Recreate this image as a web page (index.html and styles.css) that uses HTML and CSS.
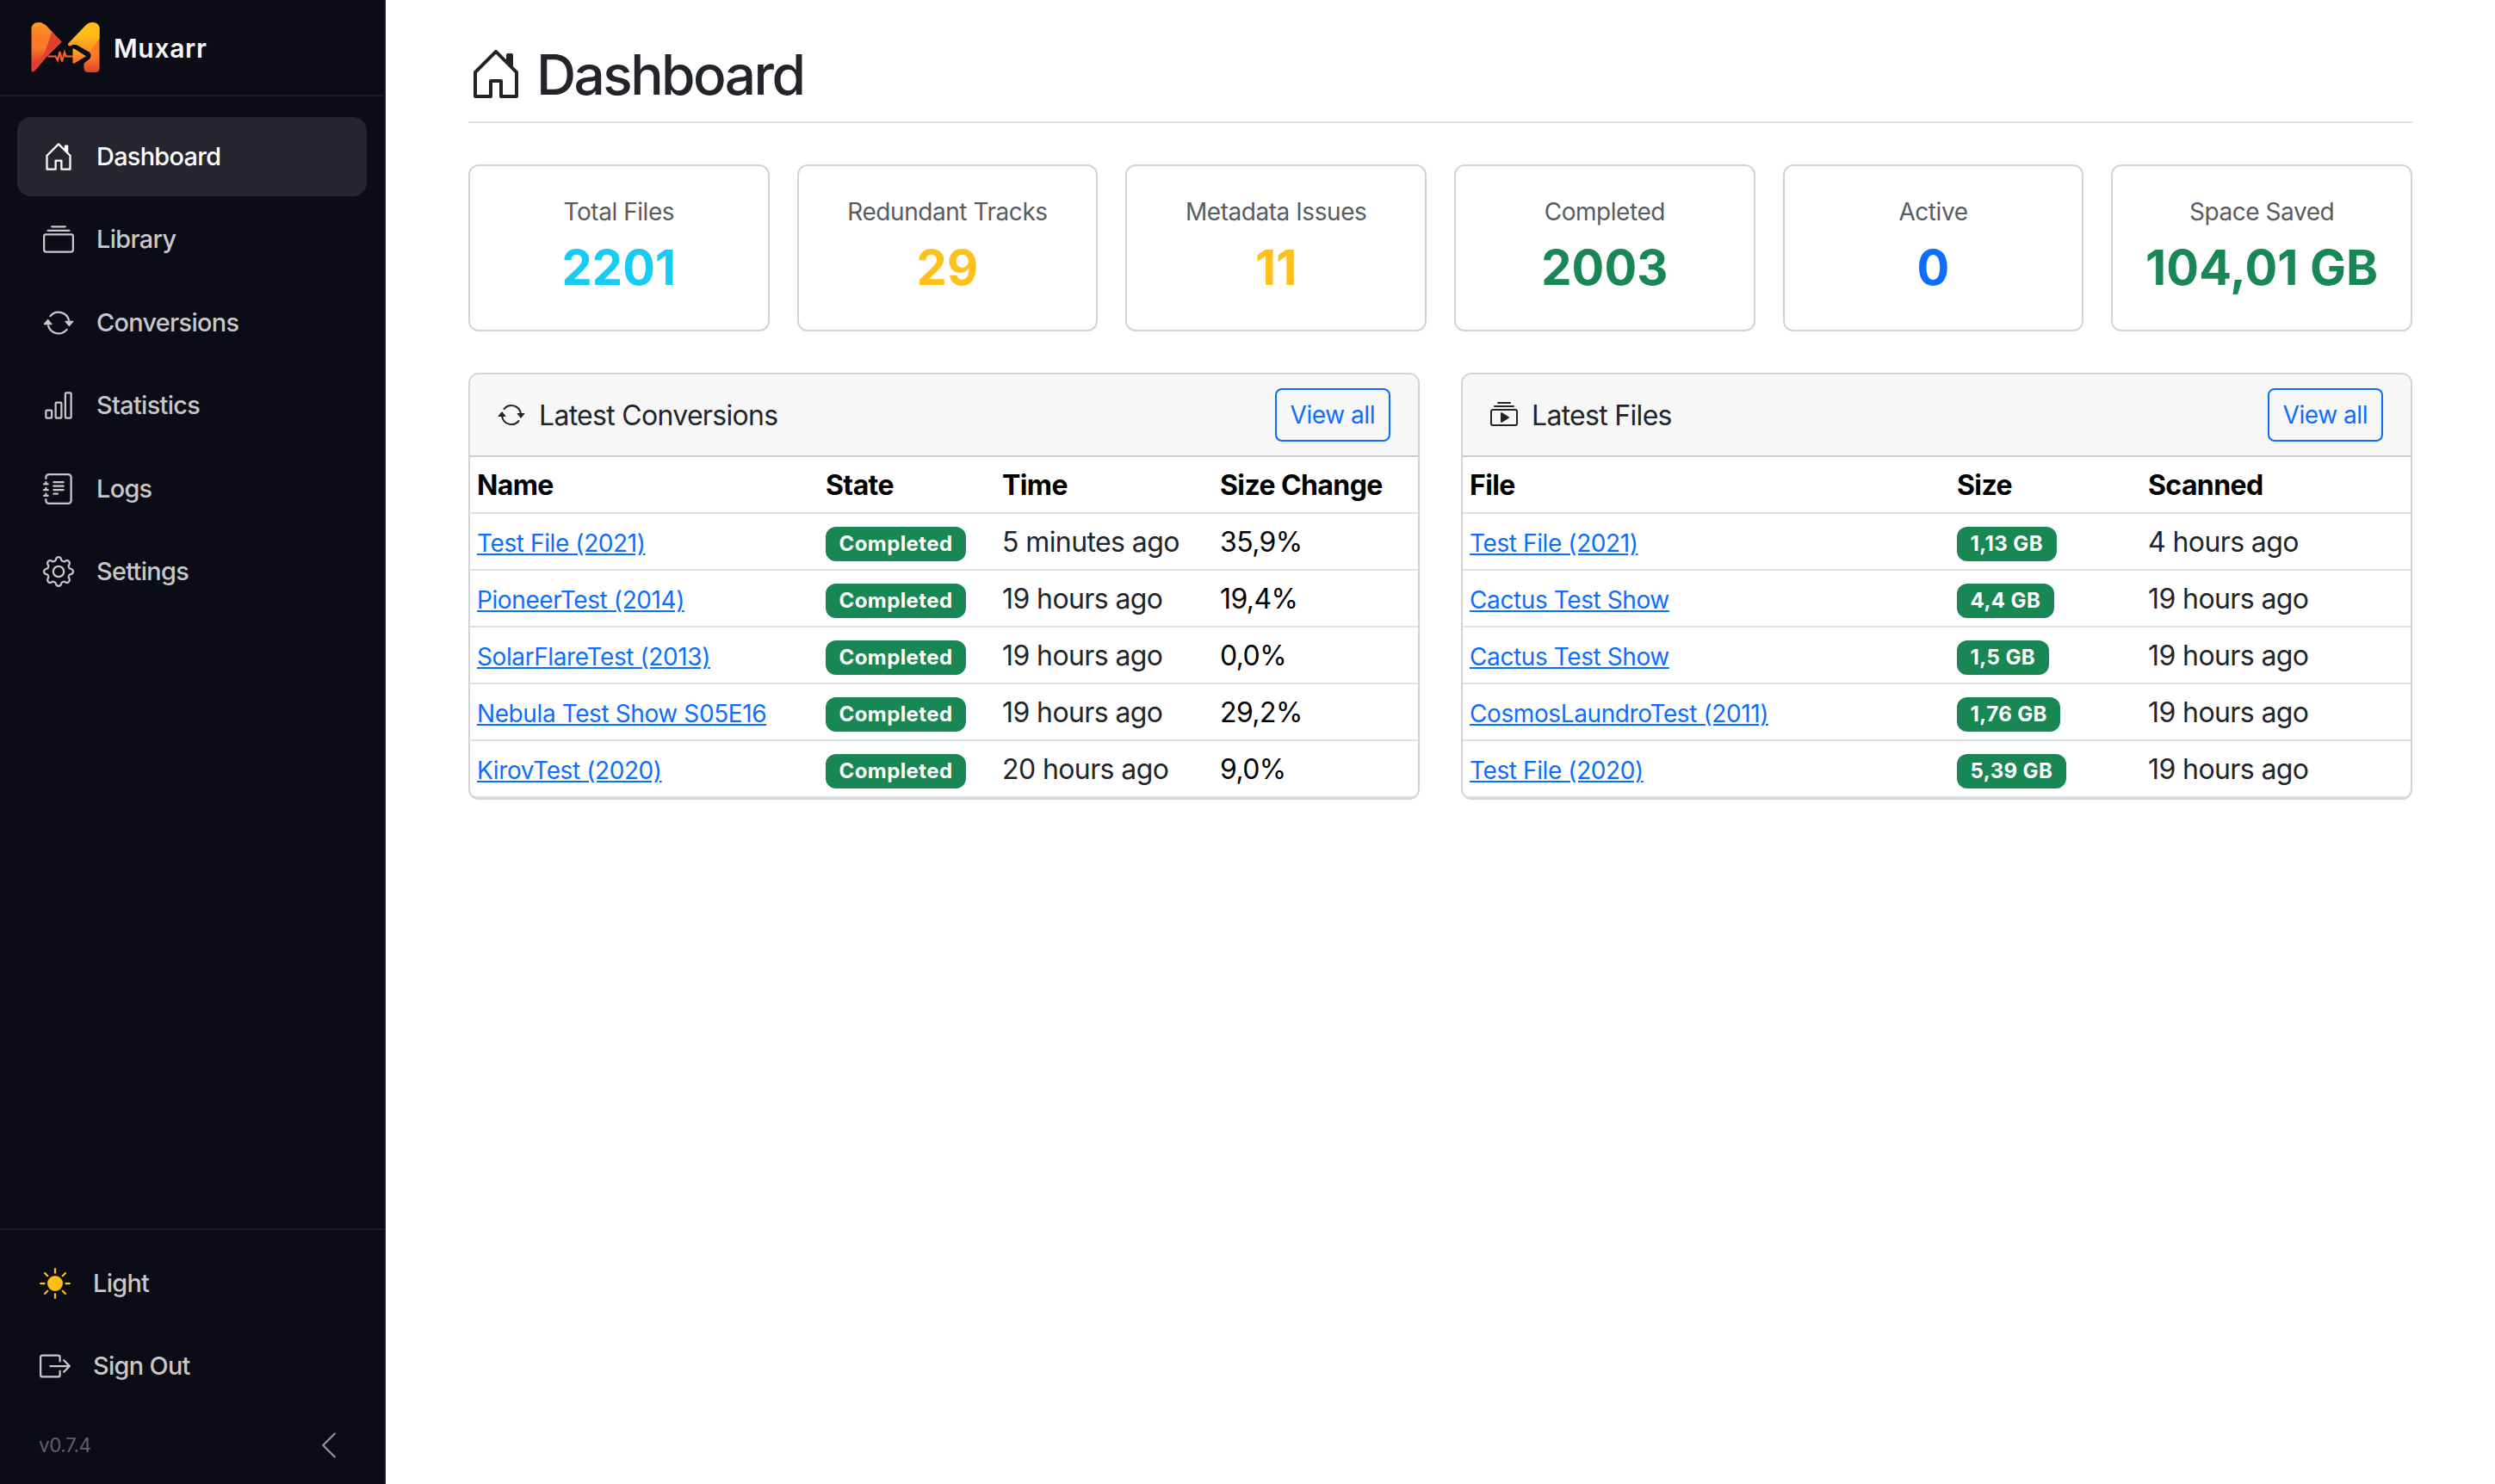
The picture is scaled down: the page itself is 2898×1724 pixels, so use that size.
FILE: index.html
```html
<!DOCTYPE html>
<html lang="en">

<head>
  <meta charset="UTF-8" />
  <meta name="viewport" content="width=device-width, initial-scale=1.0" />
  <title>Muxarr - Dashboard</title>
  <link rel="stylesheet" href="styles.css">
</head>

<body>
  <!-- shared icon shapes -->
  <svg class="icon-defs" xmlns="http://www.w3.org/2000/svg">
    <symbol id="house" viewBox="0 0 16 16">
      <path d="M8.354 1.146a.5.5 0 0 0-.708 0l-6 6A.5.5 0 0 0 1.5 7.5v7a.5.5 0 0 0 .5.5h4.5a.5.5 0 0 0 .5-.5v-4h2v4a.5.5 0 0 0 .5.5H14a.5.5 0 0 0 .5-.5v-7a.5.5 0 0 0-.146-.354L13 5.793V2.5a.5.5 0 0 0-.5-.5h-1a.5.5 0 0 0-.5.5v1.293zM2.5 14V7.707l5.5-5.5 5.5 5.5V14H10v-4a.5.5 0 0 0-.5-.5h-3a.5.5 0 0 0-.5.5v4z"/>
    </symbol>
    <symbol id="collection" viewBox="0 0 16 16">
      <path d="M2.5 3.5a.5.5 0 0 1 0-1h11a.5.5 0 0 1 0 1zm2-2a.5.5 0 0 1 0-1h7a.5.5 0 0 1 0 1zM0 13a1.5 1.5 0 0 0 1.5 1.5h13A1.5 1.5 0 0 0 16 13V6a1.5 1.5 0 0 0-1.5-1.5h-13A1.5 1.5 0 0 0 0 6zm1.5.5A.5.5 0 0 1 1 13V6a.5.5 0 0 1 .5-.5h13a.5.5 0 0 1 .5.5v7a.5.5 0 0 1-.5.5z"/>
    </symbol>
    <symbol id="repeat" viewBox="0 0 16 16">
      <path d="M11.534 7h3.932a.25.25 0 0 1 .192.41l-1.966 2.36a.25.25 0 0 1-.384 0l-1.966-2.36a.25.25 0 0 1 .192-.41m-11 2h3.932a.25.25 0 0 0 .192-.41L2.692 6.23a.25.25 0 0 0-.384 0L.342 8.59A.25.25 0 0 0 .534 9"/>
      <path d="M8 3c-1.552 0-2.94.707-3.857 1.818a.5.5 0 1 1-.771-.636A6.002 6.002 0 0 1 13.917 7H12.9A5 5 0 0 0 8 3M3.1 9a5.002 5.002 0 0 0 8.757 2.182.5.5 0 1 1 .771.636A6.002 6.002 0 0 1 2.083 9z"/>
    </symbol>
    <symbol id="chart" viewBox="0 0 16 16">
      <path d="M4 11H2v3h2zm5-4H7v7h2zm5-5v12h-2V2zm-2-1a1 1 0 0 0-1 1v12a1 1 0 0 0 1 1h2a1 1 0 0 0 1-1V2a1 1 0 0 0-1-1zM6 7a1 1 0 0 1 1-1h2a1 1 0 0 1 1 1v7a1 1 0 0 1-1 1H7a1 1 0 0 1-1-1zm-5 4a1 1 0 0 1 1-1h2a1 1 0 0 1 1 1v3a1 1 0 0 1-1 1H2a1 1 0 0 1-1-1z"/>
    </symbol>
    <symbol id="journal" viewBox="0 0 16 16">
      <path d="M5 10.5a.5.5 0 0 1 .5-.5h2a.5.5 0 0 1 0 1h-2a.5.5 0 0 1-.5-.5m0-2a.5.5 0 0 1 .5-.5h5a.5.5 0 0 1 0 1h-5a.5.5 0 0 1-.5-.5m0-2a.5.5 0 0 1 .5-.5h5a.5.5 0 0 1 0 1h-5a.5.5 0 0 1-.5-.5m0-2a.5.5 0 0 1 .5-.5h5a.5.5 0 0 1 0 1h-5a.5.5 0 0 1-.5-.5"/>
      <path d="M3 0h10a2 2 0 0 1 2 2v12a2 2 0 0 1-2 2H3a2 2 0 0 1-2-2v-1h1v1a1 1 0 0 0 1 1h10a1 1 0 0 0 1-1V2a1 1 0 0 0-1-1H3a1 1 0 0 0-1 1v1H1V2a2 2 0 0 1 2-2"/>
      <path d="M1 5v-.5a.5.5 0 0 1 1 0V5h.5a.5.5 0 0 1 0 1h-2a.5.5 0 0 1 0-1zm0 3v-.5a.5.5 0 0 1 1 0V8h.5a.5.5 0 0 1 0 1h-2a.5.5 0 0 1 0-1zm0 3v-.5a.5.5 0 0 1 1 0v.5h.5a.5.5 0 0 1 0 1h-2a.5.5 0 0 1 0-1z"/>
    </symbol>
    <symbol id="gear" viewBox="0 0 16 16">
      <path d="M8 4.754a3.246 3.246 0 1 0 0 6.492 3.246 3.246 0 0 0 0-6.492M5.754 8a2.246 2.246 0 1 1 4.492 0 2.246 2.246 0 0 1-4.492 0"/>
      <path d="M9.796 1.343c-.527-1.79-3.065-1.79-3.592 0l-.094.319a.873.873 0 0 1-1.255.52l-.292-.16c-1.64-.892-3.433.902-2.54 2.541l.159.292a.873.873 0 0 1-.52 1.255l-.319.094c-1.79.527-1.79 3.065 0 3.592l.319.094a.873.873 0 0 1 .52 1.255l-.16.292c-.892 1.64.901 3.434 2.541 2.54l.292-.159a.873.873 0 0 1 1.255.52l.094.319c.527 1.79 3.065 1.79 3.592 0l.094-.319a.873.873 0 0 1 1.255-.52l.292.16c1.64.893 3.434-.902 2.54-2.541l-.159-.292a.873.873 0 0 1 .52-1.255l.319-.094c1.79-.527 1.79-3.065 0-3.592l-.319-.094a.873.873 0 0 1-.52-1.255l.16-.292c.893-1.64-.902-3.433-2.541-2.54l-.292.159a.873.873 0 0 1-1.255-.52zm-2.633.283c.246-.835 1.428-.835 1.674 0l.094.319a1.873 1.873 0 0 0 2.693 1.115l.291-.16c.764-.415 1.6.42 1.184 1.185l-.159.292a1.873 1.873 0 0 0 1.116 2.692l.318.094c.835.246.835 1.428 0 1.674l-.319.094a1.873 1.873 0 0 0-1.115 2.693l.16.291c.415.764-.42 1.6-1.185 1.184l-.291-.159a1.873 1.873 0 0 0-2.693 1.116l-.094.318c-.246.835-1.428.835-1.674 0l-.094-.319a1.873 1.873 0 0 0-2.692-1.115l-.292.16c-.764.415-1.6-.42-1.184-1.185l.159-.291A1.873 1.873 0 0 0 1.945 8.93l-.319-.094c-.835-.246-.835-1.428 0-1.674l.319-.094A1.873 1.873 0 0 0 3.06 4.377l-.16-.292c-.415-.764.42-1.6 1.185-1.184l.292.159a1.873 1.873 0 0 0 2.692-1.115z"/>
    </symbol>
    <symbol id="sun" viewBox="0 0 16 16">
      <path d="M8 12a4 4 0 1 0 0-8 4 4 0 0 0 0 8M8 0a.5.5 0 0 1 .5.5v2a.5.5 0 0 1-1 0v-2A.5.5 0 0 1 8 0m0 13a.5.5 0 0 1 .5.5v2a.5.5 0 0 1-1 0v-2A.5.5 0 0 1 8 13m8-5a.5.5 0 0 1-.5.5h-2a.5.5 0 0 1 0-1h2a.5.5 0 0 1 .5.5M3 8a.5.5 0 0 1-.5.5h-2a.5.5 0 0 1 0-1h2A.5.5 0 0 1 3 8m10.657-5.657a.5.5 0 0 1 0 .707l-1.414 1.415a.5.5 0 1 1-.707-.708l1.414-1.414a.5.5 0 0 1 .707 0m-9.193 9.193a.5.5 0 0 1 0 .707L3.05 13.657a.5.5 0 0 1-.707-.707l1.414-1.414a.5.5 0 0 1 .707 0m9.193 2.121a.5.5 0 0 1-.707 0l-1.414-1.414a.5.5 0 0 1 .707-.707l1.414 1.414a.5.5 0 0 1 0 .707M4.464 4.465a.5.5 0 0 1-.707 0L2.343 3.05a.5.5 0 1 1 .707-.707l1.414 1.414a.5.5 0 0 1 0 .708"/>
    </symbol>
    <symbol id="signout" viewBox="0 0 16 16">
      <path d="M10 12.5a.5.5 0 0 1-.5.5h-8a.5.5 0 0 1-.5-.5v-9a.5.5 0 0 1 .5-.5h8a.5.5 0 0 1 .5.5v2a.5.5 0 0 0 1 0v-2A1.5 1.5 0 0 0 9.5 2h-8A1.5 1.5 0 0 0 0 3.5v9A1.5 1.5 0 0 0 1.5 14h8a1.5 1.5 0 0 0 1.5-1.5v-2a.5.5 0 0 0-1 0z"/>
      <path d="M15.854 8.354a.5.5 0 0 0 0-.708l-3-3a.5.5 0 0 0-.708.708L14.293 7.5H5.5a.5.5 0 0 0 0 1h8.793l-2.147 2.146a.5.5 0 0 0 .708.708z"/>
    </symbol>
    <symbol id="chevron" viewBox="0 0 16 16">
      <path d="M11.354 1.646a.5.5 0 0 1 0 .708L5.707 8l5.647 5.646a.5.5 0 0 1-.708.708l-6-6a.5.5 0 0 1 0-.708l6-6a.5.5 0 0 1 .708 0"/>
    </symbol>
    <symbol id="collection-play" viewBox="0 0 16 16">
      <path d="M2 3a.5.5 0 0 0 .5.5h11a.5.5 0 0 0 0-1h-11A.5.5 0 0 0 2 3m2-2a.5.5 0 0 0 .5.5h7a.5.5 0 0 0 0-1h-7A.5.5 0 0 0 4 1m2.765 5.576A.5.5 0 0 0 6 7v5a.5.5 0 0 0 .765.424l4-2.5a.5.5 0 0 0 0-.848z"/>
      <path d="M1.5 14.5A1.5 1.5 0 0 1 0 13V6a1.5 1.5 0 0 1 1.5-1.5h13A1.5 1.5 0 0 1 16 6v7a1.5 1.5 0 0 1-1.5 1.5zm13-1a.5.5 0 0 0 .5-.5V6a.5.5 0 0 0-.5-.5h-13A.5.5 0 0 0 1 6v7a.5.5 0 0 0 .5.5z"/>
    </symbol>
  </svg>

  <aside class="sidebar">
    <div class="brand">
      <svg class="logo" viewBox="0 0 80 58">
        <defs>
          <linearGradient id="lg-left" x1="0" y1="0" x2="0" y2="1">
            <stop offset="0" stop-color="#fd9a22"/>
            <stop offset=".3" stop-color="#fb7a29"/>
            <stop offset=".5" stop-color="#fb7a29"/>
            <stop offset=".8" stop-color="#e2402c"/>
          </linearGradient>
          <linearGradient id="lg-yellow" x1="0" y1="0" x2="0" y2="1">
            <stop offset=".4" stop-color="#fdbe18"/>
            <stop offset="1" stop-color="#fb8a24"/>
          </linearGradient>
          <linearGradient id="lg-right" x1="0" y1="0" x2="0" y2="1">
            <stop offset=".7" stop-color="#fb7a29"/>
            <stop offset="1" stop-color="#e2402c"/>
          </linearGradient>
          <linearGradient id="lg-play" x1="0" y1="0" x2="0" y2="1">
            <stop offset="0" stop-color="#fdb81a"/>
            <stop offset=".7" stop-color="#fb7a29"/>
          </linearGradient>
        </defs>
        <path fill="url(#lg-left)" d="M.5 8Q.5 0 9 0Q14 0 18.500 4.500L35.500 22.700L19 39L5 55.500Q.5 60 .5 55Z"/>
        <path fill="#e2402c" d="M24.500 10.500L35.500 22.700L19 39L5 55.500Q2 58 1 57V52Q12 44 17 32Z"/>
        <path fill="url(#lg-right)" d="M43 25L64 3Q67 0 71 0Q79.500 0 79.500 8V53Q79.500 58 75 58H66Q61.500 58 61.500 53V47.500L68 42.500Q71 39 68 34.500L54 26.500Q50 25 46 27Q43 28 43 25Z"/>
        <path fill="url(#lg-yellow)" d="M43 25L64 3Q67 0 71 0Q79.500 0 79.500 8V19L68 34.500L54 26.500Q50 25 46 27Q43 28 43 25Z"/>
        <path class="logo-wave" d="M19.500 39.500H28.500L31 44L33.500 34L36 45.500L39 35L40.500 39.500H50"/>
        <path fill="url(#lg-play)" d="M48.500 31.500Q48.500 30 50 30.500L64 39.200L50 47.700Q48.500 48 48.500 47Z"/>
      </svg>
      <span class="brand-name">Muxarr</span>
    </div>

    <nav class="menu">
      <a class="menu-item active"><svg class="icon"><use href="#house"/></svg><span>Dashboard</span></a>
      <a class="menu-item"><svg class="icon"><use href="#collection"/></svg><span>Library</span></a>
      <a class="menu-item"><svg class="icon"><use href="#repeat"/></svg><span>Conversions</span></a>
      <a class="menu-item"><svg class="icon"><use href="#chart"/></svg><span>Statistics</span></a>
      <a class="menu-item"><svg class="icon"><use href="#journal"/></svg><span>Logs</span></a>
      <a class="menu-item"><svg class="icon"><use href="#gear"/></svg><span>Settings</span></a>
    </nav>

    <div class="sidebar-footer">
      <a class="footer-item"><svg class="icon icon-sun"><use href="#sun"/></svg><span>Light</span></a>
      <a class="footer-item"><svg class="icon"><use href="#signout"/></svg><span>Sign Out</span></a>
      <div class="version-row">
        <span class="version">v0.7.4</span>
        <svg class="icon icon-chevron"><use href="#chevron"/></svg>
      </div>
    </div>
  </aside>

  <main class="content">
    <h1 class="page-title"><svg class="title-icon"><use href="#house"/></svg><span>Dashboard</span></h1>

    <section class="stats">
      <div class="stat"><div class="stat-label">Total Files</div><div class="stat-value info">2201</div></div>
      <div class="stat"><div class="stat-label">Redundant Tracks</div><div class="stat-value warning">29</div></div>
      <div class="stat"><div class="stat-label">Metadata Issues</div><div class="stat-value warning">11</div></div>
      <div class="stat"><div class="stat-label">Completed</div><div class="stat-value success">2003</div></div>
      <div class="stat"><div class="stat-label">Active</div><div class="stat-value primary">0</div></div>
      <div class="stat"><div class="stat-label">Space Saved</div><div class="stat-value success">104,01 GB</div></div>
    </section>

    <section class="panels">
      <div class="card">
        <div class="card-header">
          <svg class="card-icon"><use href="#repeat"/></svg>
          <span class="card-title">Latest Conversions</span>
          <a class="btn">View all</a>
        </div>
        <table class="table conversions">
          <thead>
            <tr><th>Name</th><th>State</th><th>Time</th><th>Size Change</th></tr>
          </thead>
          <tbody>
            <tr><td><a class="link">Test File (2021)</a></td><td><span class="badge">Completed</span></td><td class="time">5 minutes ago</td><td>35,9%</td></tr>
            <tr><td><a class="link">PioneerTest (2014)</a></td><td><span class="badge">Completed</span></td><td class="time">19 hours ago</td><td>19,4%</td></tr>
            <tr><td><a class="link">SolarFlareTest (2013)</a></td><td><span class="badge">Completed</span></td><td class="time">19 hours ago</td><td>0,0%</td></tr>
            <tr><td><a class="link">Nebula Test Show S05E16</a></td><td><span class="badge">Completed</span></td><td class="time">19 hours ago</td><td>29,2%</td></tr>
            <tr><td><a class="link">KirovTest (2020)</a></td><td><span class="badge">Completed</span></td><td class="time">20 hours ago</td><td>9,0%</td></tr>
          </tbody>
        </table>
      </div>

      <div class="card">
        <div class="card-header">
          <svg class="card-icon"><use href="#collection-play"/></svg>
          <span class="card-title">Latest Files</span>
          <a class="btn">View all</a>
        </div>
        <table class="table files">
          <thead>
            <tr><th>File</th><th>Size</th><th>Scanned</th></tr>
          </thead>
          <tbody>
            <tr><td><a class="link">Test File (2021)</a></td><td><span class="badge">1,13 GB</span></td><td class="time">4 hours ago</td></tr>
            <tr><td><a class="link">Cactus Test Show</a></td><td><span class="badge">4,4 GB</span></td><td class="time">19 hours ago</td></tr>
            <tr><td><a class="link">Cactus Test Show</a></td><td><span class="badge">1,5 GB</span></td><td class="time">19 hours ago</td></tr>
            <tr><td><a class="link">CosmosLaundroTest (2011)</a></td><td><span class="badge">1,76 GB</span></td><td class="time">19 hours ago</td></tr>
            <tr><td><a class="link">Test File (2020)</a></td><td><span class="badge">5,39 GB</span></td><td class="time">19 hours ago</td></tr>
          </tbody>
        </table>
      </div>
    </section>
  </main>
</body>

</html>
```

FILE: styles.css
```css
* {
  box-sizing: border-box;
}

body {
  margin: 0;
  display: flex;
  height: 100vh;
  overflow: hidden;
  font-family: Inter, "Liberation Sans", sans-serif;
  font-size: 32px;
  line-height: 1.5;
  color: #212529;
  background: #fff;
}

svg {
  fill: currentColor;
  flex: none;
}

.icon-defs {
  display: none;
}

/* sidebar */
.sidebar {
  width: 448px;
  flex: none;
  display: flex;
  flex-direction: column;
  background: #0c0c16;
  border-right: 2px solid #1b1b24;
  color: #c8c8c8;
  font-size: 28.8px;
  font-weight: 500;
  letter-spacing: -0.65px;
}

.brand {
  height: 112px;
  padding-left: 36px;
  display: flex;
  align-items: center;
  gap: 16px;
  border-bottom: 2px solid #1b1b24;
}

.logo {
  width: 80px;
  height: 58px;
}

.logo-wave {
  fill: none;
  stroke: #f4602a;
  stroke-width: 2.2;
}

.brand-name {
  padding-top: 2px;
  color: #f8f8f8;
  font-size: 30px;
  font-weight: 600;
  letter-spacing: 0.7px;
}

.menu {
  flex: 1;
  padding: 24px 20px;
  display: flex;
  flex-direction: column;
  gap: 4px;
}

.menu-item {
  height: 92.4px;
  padding-left: 30px;
  display: flex;
  align-items: center;
  gap: 26px;
  border-radius: 16px;
}

.menu-item span,
.footer-item span {
  padding-bottom: 1px;
}

.menu-item.active {
  background: #26262f;
  color: #fff;
}

.icon {
  width: 36px;
  height: 36px;
}

.sidebar-footer {
  height: 297px;
  padding: 14px 46px 0 45px;
  border-top: 2px solid #1b1b24;
}

.footer-item {
  height: 96px;
  padding-left: 1px;
  display: flex;
  align-items: center;
  gap: 26px;
}

.icon-sun {
  color: #fdbe18;
}

.version-row {
  height: 88px;
  display: flex;
  align-items: center;
  justify-content: space-between;
}

.version {
  color: #606067;
  font-size: 22.4px;
  font-weight: 400;
  letter-spacing: -0.4px;
}

.icon-chevron {
  color: #94949a;
}

/* page */
.content {
  flex: 1;
  padding: 48px 96px;
}

.page-title {
  height: 95px;
  margin: 0 0 48px;
  padding-bottom: 17px;
  display: flex;
  align-items: center;
  gap: 15px;
  border-bottom: 2px solid #dee2e6;
  font-size: 64px;
  font-weight: 500;
  line-height: 1.2;
  letter-spacing: -2.6px;
}

.page-title span {
  padding-top: 3px;
}

.title-icon {
  width: 64px;
  height: 64px;
}

.stats {
  display: grid;
  grid-template-columns: repeat(6, 1fr);
  gap: 32px;
  margin-bottom: 48px;
}

.stat {
  height: 194px;
  padding-top: 32px;
  text-align: center;
  border: 2px solid #d3d4d5;
  border-radius: 12px;
}

.stat-label {
  color: #595c5f;
  font-size: 28px;
  line-height: 42px;
  letter-spacing: -0.45px;
}

.stat-value {
  margin-top: 10px;
  font-size: 56px;
  font-weight: 700;
  line-height: 68px;
  letter-spacing: 0.1px;
}

.info {
  color: #17ccf3;
}

.warning {
  color: #ffc01b;
}

.success {
  color: #198754;
}

.primary {
  color: #0d6efd;
}

.panels {
  display: grid;
  grid-template-columns: 1fr 1fr;
  gap: 48px;
}

.card {
  border: 2px solid #d3d4d5;
  border-radius: 12px;
  overflow: hidden;
}

.card-header {
  height: 96px;
  padding: 0 32px;
  display: flex;
  align-items: center;
  background: #f7f7f7;
  border-bottom: 2px solid #cbcccd;
}

.card-icon {
  width: 32px;
  height: 32px;
  margin-right: 16px;
}

.card-title {
  flex: 1;
  padding-top: 2px;
  letter-spacing: -0.7px;
}

.btn {
  height: 62px;
  padding: 8px 16px;
  border: 2px solid #0d6efd;
  border-radius: 8px;
  color: #0d6efd;
  font-size: 28px;
  line-height: 42px;
  letter-spacing: -0.45px;
}

.table {
  width: 100%;
  table-layout: fixed;
  border-collapse: separate;
  border-spacing: 0;
  color: #000;
}

.table th,
.table td {
  height: 66px;
  padding: 9px 8px 7px;
  border-bottom: 2px solid #dee2e6;
  text-align: left;
  vertical-align: top;
  white-space: nowrap;
  letter-spacing: -0.6px;
}

.table th {
  font-weight: 700;
}

.conversions th:nth-child(1) {
  width: 405px;
}

.conversions th:nth-child(2) {
  width: 205px;
}

.conversions th:nth-child(3) {
  width: 253px;
}

.files th:nth-child(1) {
  width: 566px;
}

.files th:nth-child(2) {
  width: 222px;
}

.table .time {
  color: #212529;
}

.link {
  color: #0d6efd;
  font-size: 28px;
  letter-spacing: -0.4px;
  text-decoration: underline;
}

.badge {
  display: inline-block;
  padding: 8.4px 15.6px;
  border-radius: 12px;
  background: #198754;
  color: #fff;
  font-size: 24px;
  font-weight: 700;
  line-height: 1;
  letter-spacing: 0.4px;
  vertical-align: 1px;
}
```
